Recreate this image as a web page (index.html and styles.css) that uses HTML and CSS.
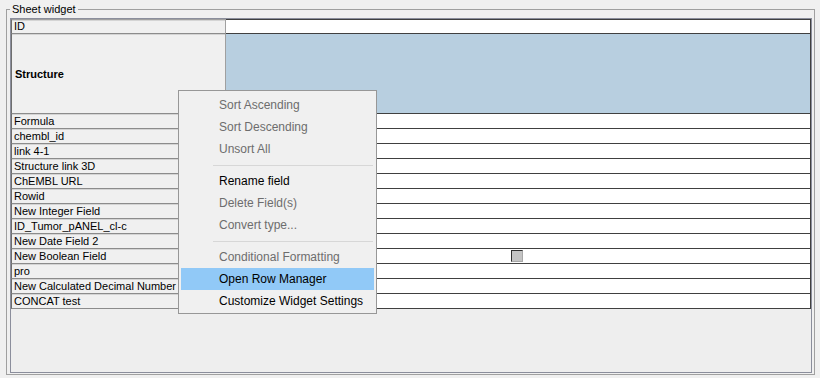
FILE: index.html
```html
<!DOCTYPE html>
<html>
<head>
  <meta charset="UTF-8">
  <link rel="stylesheet" href="styles.css">
</head>
<body>
  <div class="page">
    <fieldset class="group">
      <legend>Sheet widget</legend>
      <div class="pane">
        <div class="sheet">
          <div class="label first">ID</div>
          <div class="cell first"></div>

          <div class="label tall"><b>Structure</b></div>
          <div class="cell tall selected"></div>

          <div class="label">Formula</div>
          <div class="cell"></div>
          <div class="label">chembl_id</div>
          <div class="cell"></div>
          <div class="label">link 4-1</div>
          <div class="cell"></div>
          <div class="label">Structure link 3D</div>
          <div class="cell"></div>
          <div class="label">ChEMBL URL</div>
          <div class="cell"></div>
          <div class="label">Rowid</div>
          <div class="cell"></div>
          <div class="label">New Integer Field</div>
          <div class="cell"></div>
          <div class="label">ID_Tumor_pANEL_cl-c</div>
          <div class="cell"></div>
          <div class="label">New Date Field 2</div>
          <div class="cell"></div>
          <div class="label">New Boolean Field</div>
          <div class="cell center"><span class="check"></span></div>
          <div class="label">pro</div>
          <div class="cell"></div>
          <div class="label">New Calculated Decimal Number Field</div>
          <div class="cell"></div>
          <div class="label">CONCAT test</div>
          <div class="cell"></div>
        </div>
      </div>
    </fieldset>
  </div>

  <div class="menu">
    <div class="item disabled">Sort Ascending</div>
    <div class="item disabled">Sort Descending</div>
    <div class="item disabled">Unsort All</div>
    <div class="sep"></div>
    <div class="item">Rename field</div>
    <div class="item disabled">Delete Field(s)</div>
    <div class="item disabled">Convert type...</div>
    <div class="sep"></div>
    <div class="item disabled">Conditional Formatting</div>
    <div class="item active">Open Row Manager</div>
    <div class="item">Customize Widget Settings</div>
  </div>
</body>
</html>
```

FILE: styles.css
```css
* {
  box-sizing: border-box;
}

body {
  margin: 0;
  width: 820px;
  height: 378px;
  overflow: hidden;
  position: relative;
  background: #f0f0f0;
  color: #000000;
  font-family: "Liberation Sans", Arial, sans-serif;
  font-size: 11px;
}

.page {
  height: 378px;
  padding: 2px 5px 3px 6px;
}

.group {
  margin: 0;
  padding: 0 2px 1px 3px;
  border: 1px solid #a0a0a0;
  min-width: 0;
}

.group legend {
  padding: 0 2px;
  line-height: 14px;
  font-size: 11px;
}

.pane {
  margin-top: 2px;
  height: 355px;
  border: 1px solid #8b8e9c;
  background: #eeeeee;
  overflow: hidden;
}

.sheet {
  display: grid;
  grid-template-columns: 215px 1fr;
  grid-template-rows: 15px 80px;
  grid-auto-rows: 15px;
}

.label {
  padding-left: 2px;
  line-height: 14px;
  white-space: nowrap;
  overflow: hidden;
  background: #f0f0f0;
  border-left: 1px solid #6e6e6e;
  border-right: 1px solid #a0a0a0;
  border-bottom: 1px solid #8c8c8c;
  box-shadow: inset 0 1px 0 #d4d4d4;
}

.cell {
  background: #ffffff;
  border-right: 1px solid #404040;
  border-bottom: 1px solid #404040;
}

.label.first {
  border-top: 1px solid #a0a0a0;
  line-height: 13px;
}

.cell.first {
  border-top: 1px solid #404040;
}

.label.tall {
  display: flex;
  align-items: center;
  padding-left: 3px;
}

.cell.selected {
  background: #b8cfe0;
}

.cell.center {
  display: flex;
  align-items: center;
  justify-content: center;
}

.check {
  display: inline-block;
  width: 12px;
  height: 12px;
  margin-left: -2px;
  background: #c4c4c4;
  border-top: 1px solid #303030;
  border-left: 1px solid #303030;
  border-right: 1px solid #a8a8a8;
  border-bottom: 1px solid #a8a8a8;
}

/* popup menu */
.menu {
  position: absolute;
  left: 178px;
  top: 90px;
  width: 199px;
  padding: 3px 2px 1px;
  background: #f0f0f0;
  border: 1px solid #979797;
  font-size: 12px;
}

.item {
  height: 22px;
  line-height: 22px;
  padding-left: 38px;
  white-space: nowrap;
}

.item.disabled {
  color: #6d6d6d;
}

.item.active {
  background: #91c9f7;
}

.sep {
  height: 10px;
  margin: 0 1px 0 32px;
  padding-top: 5px;
}

.sep::before {
  content: "";
  display: block;
  height: 1px;
  background: #d7d7d7;
}
```
